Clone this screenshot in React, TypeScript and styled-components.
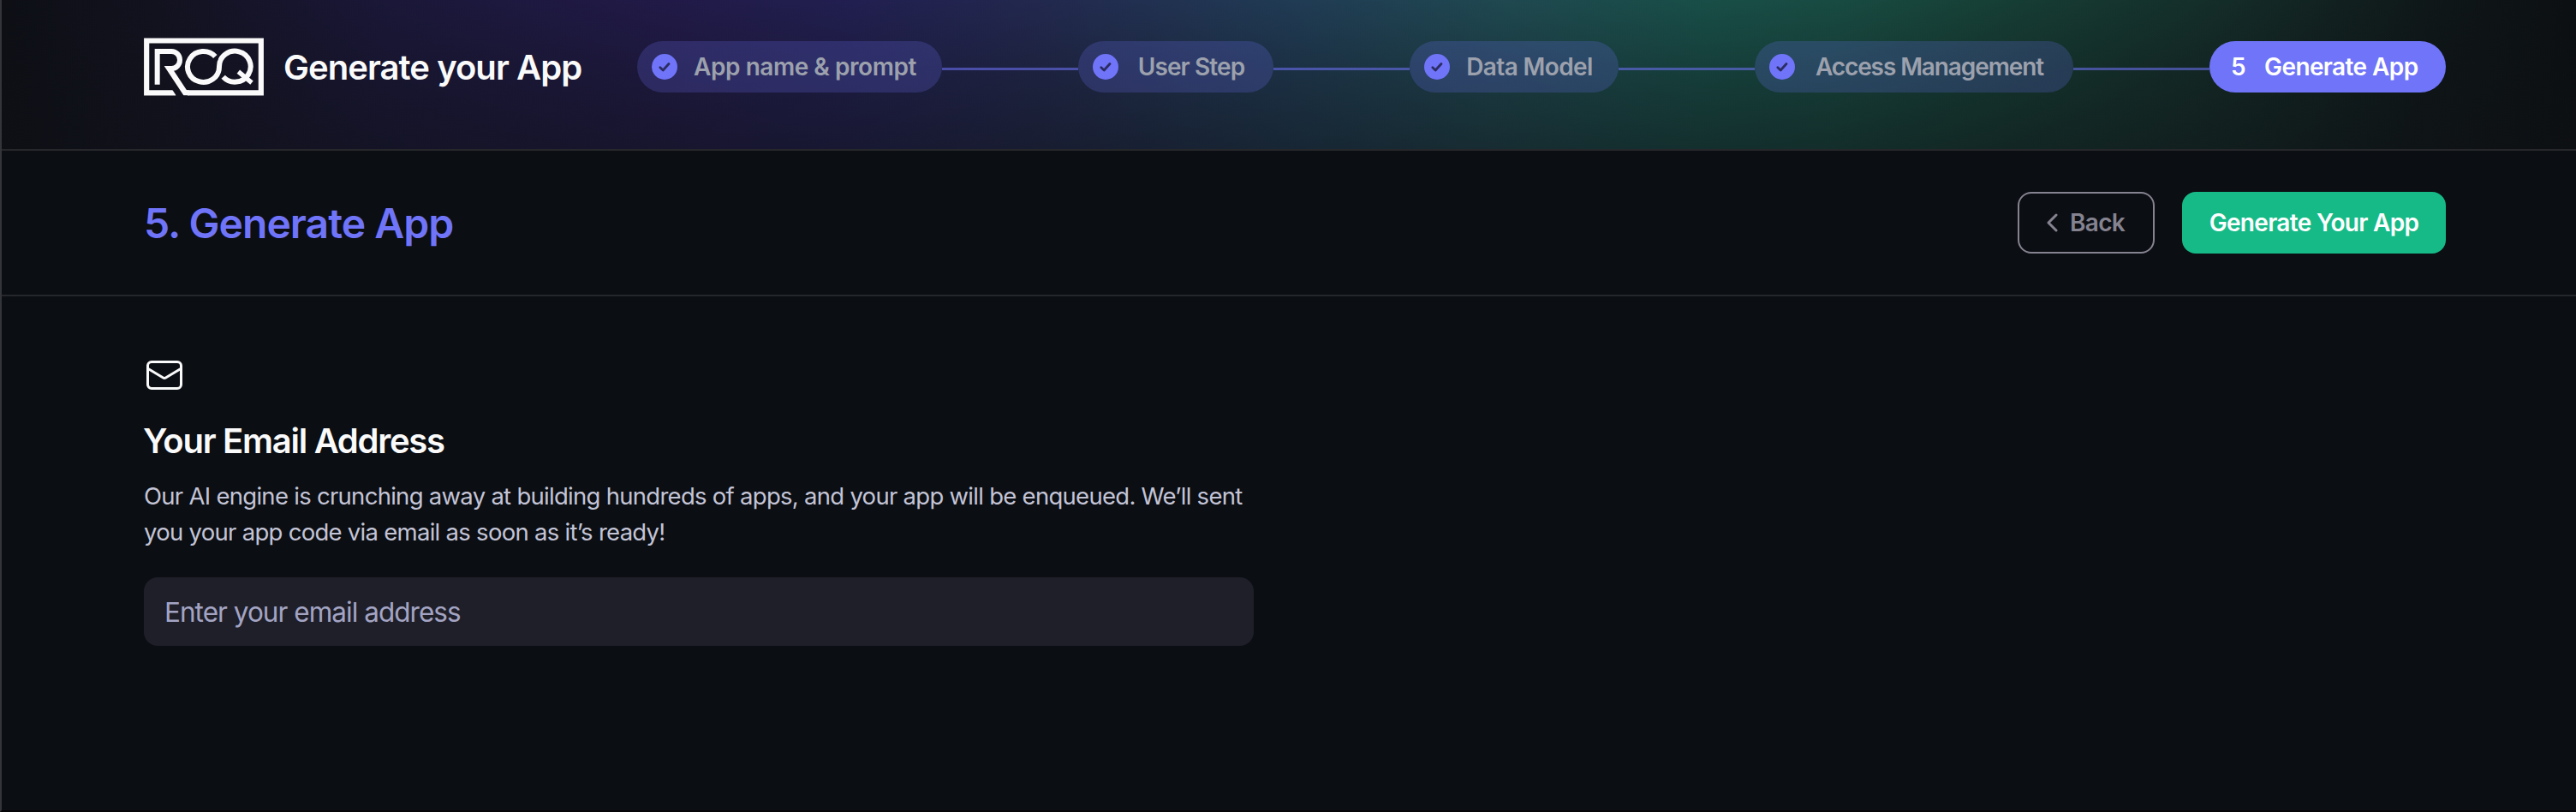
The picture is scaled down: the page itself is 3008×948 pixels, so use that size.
import React from "react";
import styled, { createGlobalStyle } from "styled-components";

const GlobalStyle = createGlobalStyle`
  *, *::before, *::after { box-sizing: border-box; }
  body {
    margin: 0;
    background: #0b0e13;
    font-family: Inter, "Liberation Sans", sans-serif;
    color: #fafafa;
  }
`;

const Page = styled.div`
  display: flex;
  flex-direction: column;
  width: 3008px;
  height: 948px;
  overflow: hidden;
  border-left: 2px solid #34353a;
  border-bottom: 2px solid #050508;
`;

const Header = styled.header`
  display: flex;
  align-items: flex-start;
  height: 176px;
  padding: 44px 152px 0 166px;
  border-bottom: 2px solid #25272b;
  background:
    linear-gradient(180deg, rgba(14, 16, 20, 0) 0%, rgba(14, 16, 20, 0.25) 45%, rgba(14, 16, 20, 0.5) 100%),
    linear-gradient(
      94deg,
      #0d0f15 0%,
      #12121f 6%,
      #1a1738 15%,
      #211a48 26%,
      #211f50 33%,
      #22284e 40%,
      #203b54 50%,
      #1f4850 58%,
      #184e47 66%,
      #184b42 71%,
      #163f35 77%,
      #142c28 86%,
      #0f1718 94%,
      #0c0f12 100%
    );
  background-origin: border-box;
`;

const Brand = styled.div`
  display: flex;
  align-items: center;
  gap: 23px;
  flex: 0 0 576px;
  height: 68px;
`;

const BrandTitle = styled.h1`
  margin: 2px 0 0;
  font-size: 40px;
  line-height: 48px;
  font-weight: 600;
  letter-spacing: -0.95px;
  white-space: nowrap;
`;

const Steps = styled.ol`
  display: flex;
  align-items: center;
  flex: 1;
  height: 68px;
  margin: 0;
  padding: 0;
  list-style: none;
`;

const StepPill = styled.li<{ $width: number; $active?: boolean }>`
  display: flex;
  align-items: center;
  flex: 0 0 ${(p) => p.$width}px;
  height: 60px;
  padding: 0 11px 0 ${(p) => (p.$active ? 25 : 17)}px;
  border-radius: 30px;
  background: ${(p) => (p.$active ? "#6f74f8" : "rgba(110, 114, 248, 0.22)")};
  color: ${(p) => (p.$active ? "#ffffff" : "#9ca1ad")};
  font-size: 28px;
  font-weight: 600;
`;

const StepLabel = styled.span<{ $spacing: number }>`
  flex: 1;
  text-align: center;
  letter-spacing: ${(p) => p.$spacing}px;
  white-space: nowrap;
`;

const Connector = styled.li`
  flex: 1;
  height: 3px;
  margin-top: 5px;
  background: rgba(110, 114, 248, 0.56);
`;

const TitleBar = styled.section`
  display: flex;
  align-items: center;
  justify-content: space-between;
  height: 170px;
  padding: 0 152px 0 166px;
  border-bottom: 2px solid #25272b;
`;

const StepTitle = styled.h2`
  margin: 2px 0 0;
  font-size: 48px;
  line-height: 58px;
  font-weight: 600;
  letter-spacing: -0.95px;
  color: #6f74f8;
`;

const Actions = styled.div`
  display: flex;
  gap: 32px;
`;

const Button = styled.button<{ $primary?: boolean }>`
  display: flex;
  align-items: center;
  justify-content: center;
  gap: 14px;
  width: ${(p) => (p.$primary ? 308 : 160)}px;
  height: 72px;
  padding: 0 ${(p) => (p.$primary ? 0 : 2)}px 0 0;
  border: ${(p) => (p.$primary ? "0" : "2px solid #858390")};
  border-radius: 16px;
  background: ${(p) => (p.$primary ? "#16ba87" : "transparent")};
  color: ${(p) => (p.$primary ? "#ffffff" : "#858390")};
  font-family: inherit;
  font-size: 28px;
  font-weight: 600;
  letter-spacing: -0.68px;
  white-space: nowrap;
`;

const Main = styled.main`
  display: flex;
  flex-direction: column;
  width: 1462px;
  padding: 68px 0 0 166px;
`;

const Heading = styled.h3`
  margin: 29px 0 0 -1px;
  font-size: 40px;
  line-height: 48px;
  font-weight: 600;
  letter-spacing: -1.27px;
`;

const Description = styled.p`
  margin: 20px 0 0;
  font-size: 27.5px;
  line-height: 41.5px;
  letter-spacing: -0.72px;
  color: #c3c4d6;
  white-space: nowrap;
`;

const EmailInput = styled.input`
  height: 80px;
  margin: 32px 0 0;
  padding: 0 24px;
  border: 0;
  border-radius: 16px;
  background: #1f1f29;
  color: #fafafa;
  font-family: inherit;
  font-size: 31.5px;
  letter-spacing: -0.97px;
  &::placeholder { color: #a3a4c3; opacity: 1; }
`;

const Logo = () => (
  <svg width="140" height="68" viewBox="24 24 420 204" fill="none" stroke="#fafafa" strokeWidth="18">
    <path d="M136 217H33.500V34.500H434.500V217H160" strokeWidth="18.500" />
    <path d="M124 207L150 246H190L160 200Z" fill="#12131f" stroke="none" />
    <path d="M71 188V72H121A29 30 0 0 1 121 132H108" />
    <path d="M95 123H118L174 208H182V226H163Z" fill="#fafafa" stroke="none" />
    <path d="M274 90A55.500 54 0 1 0 288 126A55 54 0 1 1 302 161" />
    <path d="M355 143L402 182" strokeWidth="16" />
  </svg>
);

const CheckIcon = () => (
  <svg width="30" height="30" viewBox="0 0 30 30" fill="none">
    <circle cx="15" cy="15" r="15" fill="#6f74f8" />
    <path d="M9.800 15.800L13.200 19L20 11.500" stroke="#2b2d62" strokeWidth="2.800" strokeLinecap="round" strokeLinejoin="round" />
  </svg>
);

const ChevronLeft = () => (
  <svg width="14" height="22" viewBox="0 0 14 22" fill="none">
    <path d="M12 2L3 11L12 20" stroke="#858390" strokeWidth="3" strokeLinecap="round" strokeLinejoin="round" />
  </svg>
);

const MailIcon = () => (
  <svg width="48" height="48" viewBox="0 0 48 48" fill="none" stroke="#fafafa" strokeWidth="3">
    <rect x="4.500" y="8.500" width="39" height="31" rx="4.500" />
    <path d="M5 16.500L22.500 27Q24 27.900 25.500 27L43 16.500" />
  </svg>
);

const steps = [
  { label: "App name & prompt", width: 356, spacing: -0.46 },
  { label: "User Step", width: 228, spacing: -0.9 },
  { label: "Data Model", width: 244, spacing: -0.62 },
  { label: "Access Management", width: 372, spacing: -1.1 },
];

export default function App() {
  return (
    <>
      <GlobalStyle />
      <Page>
        <Header>
          <Brand>
            <Logo />
            <BrandTitle>Generate your App</BrandTitle>
          </Brand>
          <Steps>
            {steps.map((s) => (
              <React.Fragment key={s.label}>
                <StepPill $width={s.width}>
                  <CheckIcon />
                  <StepLabel $spacing={s.spacing}>{s.label}</StepLabel>
                </StepPill>
                <Connector />
              </React.Fragment>
            ))}
            <StepPill $width={276} $active>
              <span>5</span>
              <StepLabel $spacing={-0.6}>Generate App</StepLabel>
            </StepPill>
          </Steps>
        </Header>
        <TitleBar>
          <StepTitle>5. Generate App</StepTitle>
          <Actions>
            <Button>
              <ChevronLeft />
              Back
            </Button>
            <Button $primary>Generate Your App</Button>
          </Actions>
        </TitleBar>
        <Main>
          <MailIcon />
          <Heading>Your Email Address</Heading>
          <Description>
            Our AI engine is crunching away at building hundreds of apps, and your app will be enqueued. We’ll sent
            <br />
            you your app code via email as soon as it’s ready!
          </Description>
          <EmailInput type="email" placeholder="Enter your email address" />
        </Main>
      </Page>
    </>
  );
}
